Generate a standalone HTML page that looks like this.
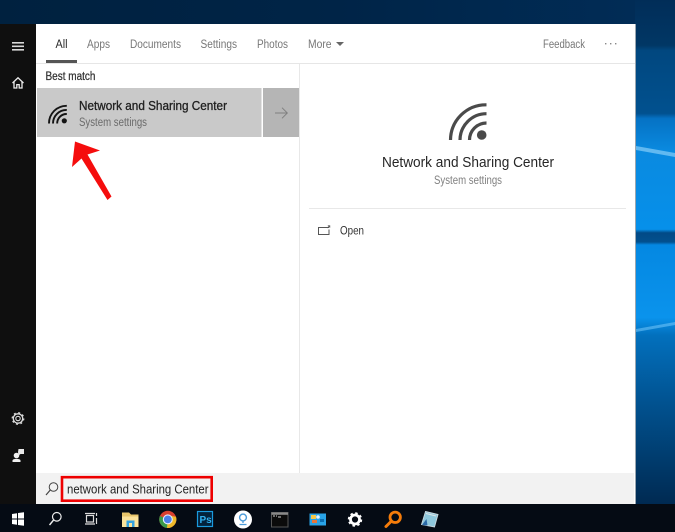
<!DOCTYPE html>
<html><head><meta charset="utf-8">
<style>
html,body{margin:0;padding:0;width:675px;height:532px;overflow:hidden;background:#002a55}
svg{display:block;position:absolute;left:0;top:0}
text{font-family:"Liberation Sans",sans-serif}
</style></head><body>
<svg width="675" height="532" viewBox="0 0 675 532" xmlns="http://www.w3.org/2000/svg">
<defs>
<linearGradient id="top" x1="0" y1="0" x2="1" y2="0"><stop offset="0" stop-color="#00213f"/><stop offset=".5" stop-color="#002447"/><stop offset="1" stop-color="#012d58"/></linearGradient>
<linearGradient id="right" x1="0" y1="0" x2="0" y2="1">
<stop offset="0" stop-color="#012d58"/><stop offset=".09" stop-color="#013765"/><stop offset=".1" stop-color="#01477f"/><stop offset=".225" stop-color="#01518f"/><stop offset=".235" stop-color="#0572c4"/><stop offset=".3" stop-color="#0a8ae0"/><stop offset=".455" stop-color="#0690ea"/><stop offset=".462" stop-color="#024a86"/><stop offset=".48" stop-color="#02508e"/><stop offset=".486" stop-color="#0488e2"/><stop offset=".63" stop-color="#0a93ec"/><stop offset=".665" stop-color="#0270bd"/><stop offset=".8" stop-color="#015290"/><stop offset="1" stop-color="#002a52"/>
</linearGradient>
</defs>
<rect width="675" height="24" fill="url(#top)"/>
<rect x="635" y="0" width="40" height="504" fill="url(#right)"/>
<path d="M636 146 L675 153 L675 157 L636 150Z" fill="#a9e0ff" opacity=".55"/>
<path d="M636 329 L675 322 V325 L636 332Z" fill="#7fd0ff" opacity=".5"/>

<!-- panel -->
<rect x="0" y="24" width="36" height="480" fill="#0f0f0f"/>
<rect x="36" y="24" width="599" height="480" fill="#fff"/>
<rect x="635" y="24" width="1" height="480" fill="#9aa6b0"/>
<!-- header -->
<rect x="36" y="63" width="599" height="1" fill="#e6e6e6"/>
<rect x="46" y="60" width="31" height="3" fill="#555"/>
<text x="55.500" y="48" font-size="11.500" fill="#2b2b2b" textLength="12" lengthAdjust="spacingAndGlyphs">All</text>
<text x="87" y="48" font-size="11.500" fill="#777" textLength="23" lengthAdjust="spacingAndGlyphs">Apps</text>
<text x="130" y="48" font-size="11.500" fill="#777" textLength="51" lengthAdjust="spacingAndGlyphs">Documents</text>
<text x="200.500" y="48" font-size="11.500" fill="#777" textLength="36.500" lengthAdjust="spacingAndGlyphs">Settings</text>
<text x="257" y="48" font-size="11.500" fill="#777" textLength="31" lengthAdjust="spacingAndGlyphs">Photos</text>
<text x="308" y="48" font-size="11.500" fill="#777" textLength="23.500" lengthAdjust="spacingAndGlyphs">More</text>
<path d="M336 42h8l-4 4z" fill="#666"/>
<text x="543" y="48" font-size="11.500" fill="#777" textLength="42" lengthAdjust="spacingAndGlyphs">Feedback</text>
<g fill="#888"><rect x="605" y="43" width="1.400" height="1.400"/><rect x="610" y="43" width="1.400" height="1.400"/><rect x="615" y="43" width="1.400" height="1.400"/></g>

<!-- left rail icons -->
<g fill="#d8d8d8"><rect x="12" y="42" width="12" height="1.600"/><rect x="12" y="45.500" width="12" height="1.600"/><rect x="12" y="49" width="12" height="1.600"/></g>
<path d="M12.500 83 L18 77.800 L23.500 83 M14 81.500 V88 H16.800 V84.600 H19.200 V88 H22 V81.500" fill="none" stroke="#ececec" stroke-width="1.300"/>
<circle cx="18" cy="418.500" r="2.200" fill="none" stroke="#ddd" stroke-width="1.100"/>
<circle cx="18" cy="418.500" r="4.700" fill="none" stroke="#ddd" stroke-width="1.300"/>
<circle cx="18" cy="418.500" r="5.800" fill="none" stroke="#ddd" stroke-width="1.200" stroke-dasharray="2 2.550"/>
<circle cx="16.500" cy="455.500" r="2.800" fill="#f0f0f0"/>
<path d="M12.500 462 V460.500 C12.500 458.300 20.500 458.300 20.500 460.500 V462Z" fill="#f0f0f0"/>
<path d="M18 452 L18.500 449 H24 V454 H20.500 L18.500 455.500Z" fill="#e8e8e8"/>

<!-- results -->
<text x="45.500" y="80" font-size="11.500" fill="#333" stroke="#333" stroke-width=".25" textLength="50" lengthAdjust="spacingAndGlyphs">Best match</text>
<rect x="37" y="88" width="224.500" height="49" fill="#c9c9c9"/>
<rect x="263" y="88" width="36" height="49" fill="#b5b5b5"/>
<path d="M275 113 H287 M282 107.700 L287.300 113 L282 118.300" fill="none" stroke="#808080" stroke-width="1"/>
<g fill="none" stroke="#141414">
<path d="M49 123.500 A17.500 17.500 0 0 1 66.800 105.800" stroke-width="1.900"/>
<path d="M53 123.500 A13.500 13.500 0 0 1 66.800 109.900" stroke-width="1.900"/>
<path d="M57.200 123.500 A9.300 9.300 0 0 1 66.800 114" stroke-width="1.900"/>
</g>
<circle cx="64.300" cy="120.800" r="2.600" fill="#141414"/>
<text x="79" y="110" font-size="12.500" fill="#1f1f1f" stroke="#1f1f1f" stroke-width=".3" textLength="148" lengthAdjust="spacingAndGlyphs">Network and Sharing Center</text>
<text x="79" y="126" font-size="11.500" fill="#6a6a6a" textLength="68" lengthAdjust="spacingAndGlyphs">System settings</text>

<!-- red arrow -->
<path d="M72 167 L75 141.500 L100 150.500 L87.500 154.500 L111.500 196.500 L107.500 200 L81.500 158.500Z" fill="#f50d0d"/>

<!-- divider -->
<rect x="299" y="64" width="1" height="409" fill="#e8e8e8"/>

<!-- detail -->
<g fill="none" stroke="#4a4a4a">
<path d="M450.500 140 A35.500 35.500 0 0 1 486.500 104.800" stroke-width="3.200"/>
<path d="M460 140 A26.500 26.500 0 0 1 486.500 113.700" stroke-width="3.200"/>
<path d="M469.500 140 A17 17 0 0 1 486.500 123" stroke-width="3.200"/>
</g>
<circle cx="481.700" cy="135" r="4.800" fill="#4a4a4a"/>
<text x="382" y="167" font-size="14.500" fill="#262626" textLength="172" lengthAdjust="spacingAndGlyphs">Network and Sharing Center</text>
<text x="434" y="184" font-size="11.500" fill="#808080" textLength="68" lengthAdjust="spacingAndGlyphs">System settings</text>
<rect x="309" y="208" width="317" height="1" fill="#e8e8e8"/>
<path d="M329 227.500 H318.500 V234.500 H329 V229.500" fill="none" stroke="#555" stroke-width="1"/>
<path d="M327.500 228 L329.500 226 M327.800 225.800 H329.800 V227.800" fill="none" stroke="#555" stroke-width=".8"/>
<text x="340" y="234.500" font-size="11.500" fill="#333" textLength="24" lengthAdjust="spacingAndGlyphs">Open</text>

<!-- search bar -->
<rect x="36" y="473" width="598" height="31" fill="#f2f2f2"/>
<rect x="62" y="477.200" width="149.700" height="23.500" fill="#f2f2f2" stroke="#ee0000" stroke-width="2.600"/>
<circle cx="53.500" cy="487" r="4.300" fill="none" stroke="#444" stroke-width="1"/>
<path d="M50.300 490 L46 495" stroke="#444" stroke-width="1.200"/>
<text x="67" y="493.500" font-size="12.800" fill="#222" textLength="141.500" lengthAdjust="spacingAndGlyphs">network and Sharing Center</text>

<!-- taskbar -->
<rect x="0" y="504" width="675" height="28" fill="#050b14"/>
<g fill="#fff"><path d="M12 514 L17 513.200 V518.500 H12Z"/><path d="M18 513 L24 512.200 V518.500 H18Z"/><path d="M12 519.500 H17 V524.800 L12 524Z"/><path d="M18 519.500 H24 V525.800 L18 525Z"/></g>
<circle cx="56.800" cy="516.800" r="4.300" fill="none" stroke="#eee" stroke-width="1.200"/>
<path d="M53.600 520 L49.500 525" stroke="#eee" stroke-width="1.400"/>
<g fill="none" stroke="#ddd" stroke-width="1.200"><rect x="86.500" y="515.500" width="7" height="6.500"/><path d="M85 513.500H95M85 524H95"/><path d="M96.500 513v3M96.500 518v6"/></g>
<!-- folder -->
<path d="M122 512.500 H129 L131 514.500 H138.500 V527 H122Z" fill="#e8c66c"/>
<rect x="122" y="516.500" width="16.500" height="10.500" fill="#fbe39b"/>
<rect x="126.500" y="520.500" width="8" height="6.500" fill="#35a3e0"/>
<rect x="129" y="523" width="3" height="4" fill="#fbe39b"/>
<!-- chrome -->
<circle cx="167.800" cy="519.400" r="8.600" fill="#d9402f"/>
<path d="M167.800 519.400 L159.900 516 A8.600 8.600 0 0 0 167.200 528 L171.500 521.500Z" fill="#3a9a4a"/>
<path d="M167.800 519.400 L167 528 A8.600 8.600 0 0 0 176 516.700 L168 515.400Z" fill="#eeb92a"/>
<circle cx="167.800" cy="519.400" r="5" fill="#e8eefc"/>
<circle cx="167.800" cy="519.400" r="3.900" fill="#4a7fe8"/>
<!-- ps -->
<rect x="197.500" y="511.500" width="15" height="15" fill="#03223c" stroke="#1a9ade" stroke-width="1.200"/>
<text x="199.500" y="523" font-size="10" font-weight="bold" fill="#31b0f0">Ps</text>
<!-- white circle -->
<circle cx="243" cy="519.500" r="9" fill="#fff"/>
<circle cx="243" cy="517.500" r="3.400" fill="none" stroke="#4a9ad8" stroke-width="1.400"/>
<path d="M243 521 V523 M239.500 524.500 H246.500" stroke="#4a9ad8" stroke-width="1.300"/>
<!-- console -->
<rect x="271.500" y="512.500" width="16.500" height="14.500" fill="#0b0b0b" stroke="#555" stroke-width="1"/>
<rect x="271.500" y="512.500" width="16.500" height="2.300" fill="#8a8a8a"/>
<path d="M273 516h2M276 516h1M278 517h3" stroke="#ccc" stroke-width="1"/>
<!-- panel blue -->
<rect x="309.500" y="513.500" width="16.500" height="12" fill="#29a3e6"/>
<rect x="311" y="515" width="5" height="4" fill="#f4c84a"/>
<circle cx="318" cy="517" r="1.800" fill="#e6f4ff"/>
<rect x="320" y="519" width="4" height="3" fill="#0b6db0"/>
<rect x="312" y="520" width="5" height="3" fill="#e7763a"/>
<!-- gear -->
<circle cx="355" cy="519.500" r="4.500" fill="none" stroke="#fff" stroke-width="2.800"/>
<circle cx="355" cy="519.500" r="6.300" fill="none" stroke="#fff" stroke-width="1.800" stroke-dasharray="2.500 2.450"/>
<!-- magnifier -->
<circle cx="395.200" cy="517.300" r="5.200" fill="none" stroke="#f57c0a" stroke-width="2.800"/>
<path d="M391 521.500 L386 526.500" stroke="#f57c0a" stroke-width="3" stroke-linecap="round"/>
<!-- notepad -->
<path d="M425.500 511.500 L438 514.500 L434.500 527 L421.500 524.500Z" fill="#8fc8dc" stroke="#c9d8de" stroke-width=".9"/>
<path d="M426 513.500 L436 516" stroke="#e0e6e8" stroke-width="1"/>
<path d="M422 525 L426.500 519 L427.500 525.500Z" fill="#2b6aa8"/>
</svg>
</body></html>
